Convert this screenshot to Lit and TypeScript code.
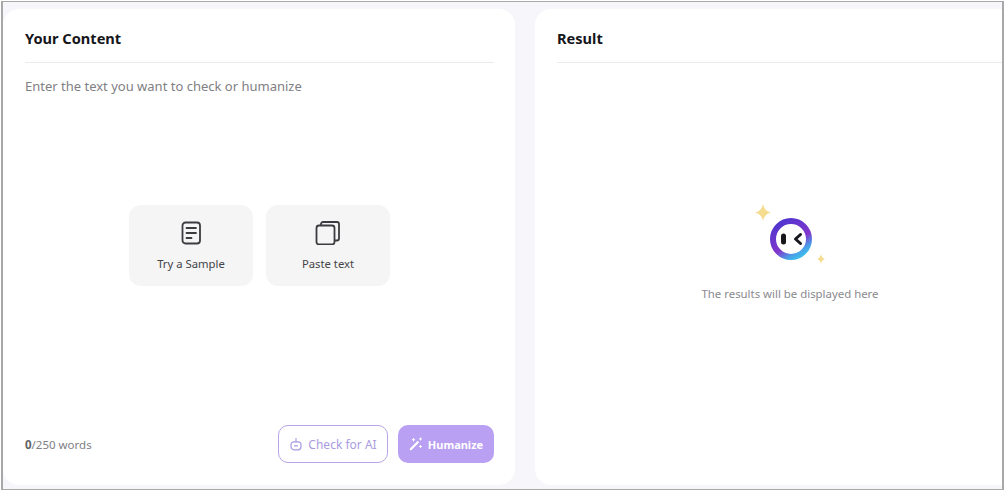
import { LitElement, css, html } from 'lit';
import { customElement } from 'lit/decorators.js';

@customElement('app-root')
export class AppRoot extends LitElement {
	static styles = css`
		:host {
			display: block;
			width: 1005px;
			height: 492px;
			background: #fff;
			font-family: "Noto Sans", "Open Sans", sans-serif;
			overflow: hidden;
		}
		.frame {
			box-sizing: border-box;
			width: 1003px;
			height: 489px;
			margin: 1px 0 0 1px;
			border: 1px solid #a8a8a8;
			border-width: 1px 2px 1px 2px;
			background: #f6f6fb;
			display: flex;
			gap: 20px;
			padding: 7px 0 4px 0;
			overflow: hidden;
		}
		.card {
			box-sizing: border-box;
			background: #fff;
			border-radius: 16px;
			padding: 0 21px 0 22px;
			display: flex;
			flex-direction: column;
			flex: none;
		}
		.left {
			width: 512px;
		}
		.right {
			width: 510px;
			padding-right: 22px;
		}
		.head {
			height: 53px;
			border-bottom: 1px solid #ebebeb;
			font-size: 14.6px;
			font-weight: 700;
			line-height: 58px;
			color: #15151a;
			flex: none;
		}
		.hint {
			margin-top: 12px;
			font-size: 13px;
			line-height: 22px;
			color: #808084;
		}
		.choices {
			flex: 1;
			display: flex;
			justify-content: center;
			align-items: center;
			gap: 13px;
			padding-bottom: 31px;
		}
		.choice {
			width: 124px;
			height: 81px;
			border-radius: 12px;
			background: #f5f5f5;
			display: flex;
			flex-direction: column;
			align-items: center;
			gap: 10px;
			padding-top: 16px;
			box-sizing: border-box;
			font-size: 11.3px;
			line-height: 18px;
			color: #444448;
		}
		.choice svg {
			display: block;
		}
		.foot {
			flex: none;
			display: flex;
			align-items: center;
			padding-bottom: 22px;
		}
		.count {
			font-size: 11.5px;
			color: #808084;
			flex: 1;
		}
		.count b {
			color: #5f5f63;
		}
		.btn {
			box-sizing: border-box;
			height: 38px;
			border-radius: 10px;
			display: flex;
			align-items: center;
			justify-content: center;
			gap: 5px;
			font-size: 12px;
		}
		.check {
			width: 110px;
			border: 1px solid #b7a5e6;
			color: #a99be0;
			margin-right: 10px;
		}
		.human {
			width: 96px;
			background: #b9a0f2;
			color: #fff;
			font-size: 11px;
			font-weight: 700;
		}
		.empty {
			flex: 1;
			display: flex;
			flex-direction: column;
			align-items: center;
			padding-top: 141px;
		}
		.empty p {
			margin: 18px 0 0;
			font-size: 11.4px;
			line-height: 16px;
			color: #8a8a8e;
		}
	`;

	render() {
		return html`
			<div class="frame">
				<section class="card left">
					<div class="head">Your Content</div>
					<div class="hint">Enter the text you want to check or humanize</div>
					<div class="choices">
						<div class="choice">
							<svg width="24" height="24" viewBox="0 0 24 24" fill="none" stroke="#3c3c40" stroke-width="1.8" stroke-linecap="round">
								<rect x="3.500" y="1.500" width="17.500" height="21" rx="3"/>
								<path d="M7.500 7h9.500M7.500 12h9.500M7.500 17h5"/>
							</svg>
							<span>Try a Sample</span>
						</div>
						<div class="choice">
							<svg width="26" height="24" viewBox="0 0 26 24" fill="none" stroke="#3c3c40" stroke-width="1.8" stroke-linejoin="round">
								<rect x="1.500" y="4.500" width="18" height="19" rx="2.500"/>
								<path d="M6 4.500V3a2 2 0 0 1 2-2h14a2 2 0 0 1 2 2v14.500a2 2 0 0 1-2 2h-2.500"/>
							</svg>
							<span>Paste text</span>
						</div>
					</div>
					<div class="foot">
						<div class="count"><b>0</b>/250 words</div>
						<div class="btn check">
							<svg width="14" height="14" viewBox="0 0 14 14" fill="none" stroke="#a99be0" stroke-width="1.200" stroke-linecap="round">
								<rect x="2" y="4.800" width="10" height="8" rx="3"/>
								<path d="M7 4.800V2.800M5.500 8.800h3"/>
								<circle cx="7" cy="1.800" r="0.800" fill="#a99be0" stroke="none"/>
							</svg>
							<span>Check for AI</span>
						</div>
						<div class="btn human">
							<svg width="14" height="14" viewBox="0 0 14 14" fill="none" stroke="#fff" stroke-linecap="round">
								<path d="M1.800 12.200 8.800 5.200" stroke-width="2.200"/>
								<path d="M4.500 1.500v2.500M3.300 2.700h2.400M11.500 1v2M10.500 2h2M11.500 8.500v2M10.500 9.500h2" stroke-width="1"/>
							</svg>
							<span>Humanize</span>
						</div>
					</div>
				</section>
				<section class="card right">
					<div class="head">Result</div>
					<div class="empty">
						<svg width="74" height="64" viewBox="0 0 74 64">
							<defs>
								<linearGradient id="ring" x1="0.2" y1="0" x2="0.8" y2="1">
									<stop offset="0" stop-color="#4f35cf"/>
									<stop offset="0.6" stop-color="#8236cc"/>
									<stop offset="0.85" stop-color="#4aa0e8"/>
									<stop offset="1" stop-color="#3cc0ea"/>
								</linearGradient>
							</defs>
							<path d="M10 0q1.200 7 8 8.500q-6.800 1.500-8 8.500q-1.200-7-8-8.500q6.800-1.500 8-8.500z" fill="#f6dc8e"/>
							<path d="M68 50q.6 4 4 5q-3.400 1-4 5q-.6-4-4-5q3.400-1 4-5z" fill="#f6dc8e"/>
							<circle cx="38" cy="35" r="18" fill="#fff" stroke="url(#ring)" stroke-width="6"/>
							<rect x="28" y="29.500" width="5" height="11" rx="2.500" fill="#17171c"/>
							<path d="M47.500 30.500 42.500 35l5 4.500" fill="none" stroke="#17171c" stroke-width="3" stroke-linecap="round" stroke-linejoin="round"/>
						</svg>
						<p>The results will be displayed here</p>
					</div>
				</section>
			</div>
		`;
	}
}
